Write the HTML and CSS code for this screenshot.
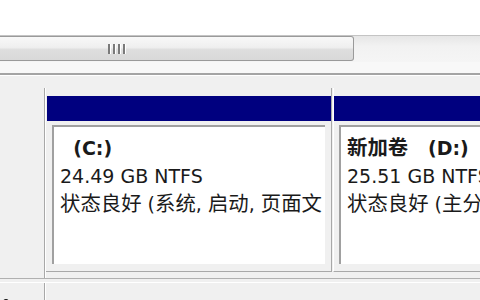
FILE: index.html
```html
<!DOCTYPE html>
<html>
<head>
<meta charset="utf-8">
<link rel="stylesheet" href="styles.css">
</head>
<body>
<div class="screen">
  <div class="top"></div>
  <div class="hscroll">
    <div class="thumb"><span class="grip"><i></i><i></i><i></i><i></i></span></div>
    <div class="track"></div>
  </div>
  <div class="under"></div>
  <div class="panel">
    <div class="row">
      <div class="label-col"></div>
      <div class="parts">
        <div class="part part-c">
          <div class="bar"></div>
          <div class="body">
            <div class="box">
              <div class="txt">
                <div class="name">  (C:)</div>
                <div>24.49 GB NTFS</div>
                <div><span class="cj">状态良好</span> (<span class="cj">系统</span>, <span class="cj">启动</span>, <span class="cj">页面文件</span>, <span class="cj">故障转储</span>, <span class="cj">主分区</span>)</div>
              </div>
            </div>
          </div>
        </div>
        <div class="part part-d">
          <div class="bar"></div>
          <div class="body">
            <div class="box">
              <div class="txt">
                <div class="name"><span class="cj">新加卷</span>   (D:)</div>
                <div>25.51 GB NTFS</div>
                <div><span class="cj">状态良好</span> (<span class="cj">主分区</span>)</div>
              </div>
            </div>
          </div>
        </div>
      </div>
    </div>
    <div class="row row2">
      <div class="label-col"><span class="dot"></span></div>
      <div class="parts"></div>
    </div>
  </div>
</div>
</body>
</html>
```
FILE: styles.css
```css
html, body {
  margin: 0;
  padding: 0;
  background: #fff;
}
.screen {
  width: 480px;
  height: 300px;
  overflow: hidden;
  font-family: "DejaVu Sans", "Noto Sans CJK SC", sans-serif;
  font-size: 19px;
  color: #1a1a1a;
}
.cj {
  font-size: 20.4px;
}
.top {
  height: 35px;
  background: #fff;
}
.hscroll {
  height: 26px;
  display: flex;
  background: linear-gradient(#e6e6e6, #f2f2f2 40%, #f5f5f5);
  border-top: 1px solid #c4c4c4;
}
.thumb {
  box-sizing: border-box;
  width: 354px;
  height: 25px;
  border: 1px solid #9a9a9a;
  border-left: none;
  border-radius: 0 3px 3px 0;
  background: linear-gradient(#f8f8f8, #efefef 45%, #dedede 55%, #d9d9d9);
  display: flex;
  align-items: center;
  padding-left: 108px;
}
.grip {
  display: flex;
  gap: 2px;
  height: 10px;
}
.grip i {
  display: block;
  width: 2px;
  height: 10px;
  background: #7a7a7a;
  border-right: 1px solid #fff;
}
.track {
  flex: 1;
}
.under {
  height: 11px;
  background: #f8f8f8;
  border-bottom: 2px solid #a4a4a4;
}
.panel {
  background: #f0f0f0;
  border-top: 1px solid #fff;
  padding-top: 12px;
}
.row {
  display: flex;
  border-bottom: 1px solid #b0b0b0;
}
.label-col {
  width: 44px;
  border-right: 1px solid #a8a8a8;
  flex: none;
  position: relative;
}
.parts {
  display: flex;
  flex: 1;
  padding-bottom: 6px;
  border-left: 1px solid #fff;
}
.part {
  padding-top: 8px;
  border-bottom: 1px solid #a8a8a8;
  box-sizing: border-box;
}
.part-c {
  width: 286px;
  border-right: 1px solid #a8a8a8;
}
.part-d {
  flex: 1;
  border-left: 1px solid #fff;
  margin-left: 1px;
}
.bar {
  height: 25px;
  background: #00007f;
  margin-left: 1px;
}
.part-d .bar {
  margin-left: 0;
}
.body {
  padding: 4px 6px 7px 6px;
}
.part-d .body {
  padding-left: 5px;
  padding-right: 0;
}
.box {
  height: 130px;
  background: #fff;
  border-top: 2px solid #a0a0a0;
  border-left: 2px solid #a0a0a0;
  padding: 7px 0 0 6px;
  line-height: 28px;
}
.txt {
  white-space: nowrap;
  overflow: hidden;
  margin-right: 3px;
}
.name {
  font-weight: bold;
  white-space: pre;
}
.row2 {
  height: 40px;
  border-bottom: none;
  margin-top: 3px;
  border-top: 1px solid #fff;
}
.row2 .parts {
  padding-bottom: 0;
}
.dot {
  position: absolute;
  left: 3px;
  top: 16px;
  width: 6px;
  height: 7px;
  border-radius: 50%;
  background: #111;
}
```
